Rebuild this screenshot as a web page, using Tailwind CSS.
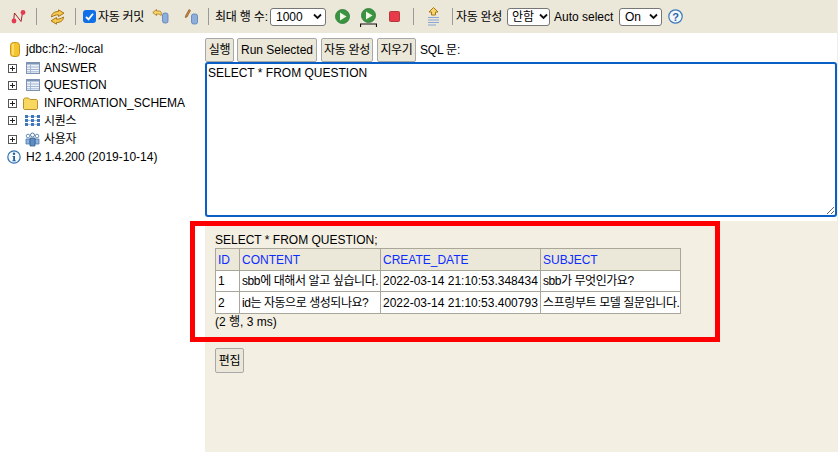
<!DOCTYPE html>
<html lang="ko">
<head>
    <meta charset="UTF-8">
    <script src="https://cdn.jsdelivr.net/npm/@tailwindcss/browser@4"></script>
    <title>H2 Console</title>
</head>
<body class="bg-white">
<div class="relative w-[838px] h-[452px] overflow-hidden flex flex-col text-[12px] leading-[14px] text-black font-['Liberation_Sans','Noto_Sans_CJK_KR',sans-serif]">

    <!-- toolbar -->
    <div class="h-[33px] shrink-0 bg-[#ebe7d9] flex items-center border-r border-[#eeeeee]">
        <svg class="ml-[11px] w-[16px] h-[16px]" viewBox="0 0 16 16" fill="none"><path d="M2.500 12 L3.500 4 L10 12.500 L11.500 4" stroke="#a8232a" stroke-width="1"/><circle cx="3" cy="12" r="2.400" fill="#e63a52"/><circle cx="12" cy="3.500" r="2.400" fill="#e63a52"/></svg>
        <div class="ml-[9px] w-px h-[17px] bg-[#999]"></div>
        <svg class="ml-[13px] w-[15px] h-[16px]" viewBox="0 0 15 16" fill="#f6c94a" stroke="#a9761a" stroke-width="1"><path d="M1.500 8 C1.500 4 5 2.500 8.500 2.500 V0.800 L14 4.200 L8.500 7.500 V5.800 C6 5.800 4 6.500 1.500 8Z"/><path d="M13.500 8 C13.500 12 10 13.500 6.500 13.500 V15.200 L1 11.800 L6.500 8.500 V10.200 C9 10.200 11 9.500 13.500 8Z"/></svg>
        <div class="ml-[10px] w-px h-[17px] bg-[#999]"></div>
        <div class="relative ml-[7px] w-[13px] h-[13px]">
            <input type="checkbox" checked class="block appearance-none w-[13px] h-[13px] rounded-[3px] bg-[#0f6fe6]">
            <svg class="absolute left-0 top-0 w-[13px] h-[13px]" viewBox="0 0 13 13" fill="none"><path d="M3 6.800 L5.500 9.300 L10 3.800" stroke="#fff" stroke-width="1.800"/></svg>
        </div>
        <span class="ml-[2px] w-[46px] whitespace-nowrap tracking-[-0.3px]">자동 커밋</span>
        <svg class="ml-[8px] w-[17px] h-[16px]" viewBox="0 0 17 16"><path d="M0.800 3.500 L4.500 0.500 V2 H7.500 C9.500 2 9.800 5 9 6.500 C8.500 5.500 7.500 5 4.500 5 V6.500Z" fill="#f6d668" stroke="#a9761a" stroke-width="0.800"/><rect x="10.500" y="4" width="5.500" height="10" rx="2" fill="#8eaedb" stroke="#5a7fb5" stroke-width="0.800"/></svg>
        <svg class="ml-[15px] w-[15px] h-[16px]" viewBox="0 0 15 16"><path d="M1.500 7 L5 0.500 L6.500 1.500 L3 8 L1.300 8.500Z" fill="#c9873a" stroke="#7a4a1c" stroke-width="0.600"/><rect x="7.500" y="5" width="6" height="10" rx="2" fill="#8eaedb" stroke="#5a7fb5" stroke-width="0.800"/></svg>
        <div class="ml-[9px] w-px h-[17px] bg-[#999]"></div>
        <span class="ml-[6px] whitespace-nowrap w-[51px] tracking-[-0.2px]">최대 행 수:</span>
        <div class="relative ml-[4px] w-[56px] h-[18px]">
            <select class="appearance-none w-full h-full bg-white border border-[#767676] rounded-[3px] pl-[5px] text-[12px]"><option>1000</option></select>
            <svg class="absolute right-[4px] top-[5px] w-[9px] h-[7px]" viewBox="0 0 9 7" fill="none"><path d="M1 1.500 L4.500 5 L8 1.500" stroke="#111" stroke-width="1.800"/></svg>
        </div>
        <svg class="ml-[9px] w-[15px] h-[15px]" viewBox="0 0 15 15"><circle cx="7.500" cy="7.500" r="7" fill="#3a9440" stroke="#2a7a38" stroke-width="0.800"/><path d="M5 3.500 L11.500 7.500 L5 11.500Z" fill="#f2f7ea"/></svg>
        <div class="ml-[10px] w-[17px] h-[19px] relative top-[1px]">
            <svg class="absolute left-[1px] top-0 w-[15px] h-[15px]" viewBox="0 0 15 15"><circle cx="7.500" cy="7.500" r="7" fill="#3a9440" stroke="#2a7a38" stroke-width="0.800"/><path d="M5 3.500 L11.500 7.500 L5 11.500Z" fill="#f2f7ea"/></svg>
            <svg class="absolute left-0 bottom-0 w-[17px] h-[4px]" viewBox="0 0 17 4" fill="none"><path d="M0.500 4 V1 H16.500 V4" stroke="#111" stroke-width="1.200"/></svg>
        </div>
        <svg class="ml-[12px] w-[11px] h-[11px]" viewBox="0 0 11 11"><rect x="0.500" y="0.500" width="10" height="10" rx="1" fill="#e83a48" stroke="#b23a3a"/></svg>
        <div class="ml-[13px] w-px h-[17px] bg-[#999]"></div>
        <svg class="ml-[13px] w-[13px] h-[19px]" viewBox="0 0 13 19"><path d="M6.500 0.500 L11 5 H8.500 V8 H4.500 V5 H2Z" fill="#f6d668" stroke="#a9761a"/><path d="M1 10.500 H12 M1 13 H12 M1 15.500 H12 M1 18 H9" stroke="#8aa6d8" stroke-width="1"/></svg>
        <div class="ml-[12px] w-px h-[17px] bg-[#999]"></div>
        <span class="ml-[3px] whitespace-nowrap w-[45px] tracking-[-0.3px]">자동 완성</span>
        <div class="relative ml-[6px] w-[43px] h-[18px]">
            <select class="appearance-none w-full h-full bg-white border border-[#767676] rounded-[3px] pl-[4px] text-[12px]"><option>안함</option></select>
            <svg class="absolute right-[2px] top-[5px] w-[9px] h-[7px]" viewBox="0 0 9 7" fill="none"><path d="M1 1.500 L4.500 5 L8 1.500" stroke="#111" stroke-width="1.800"/></svg>
        </div>
        <span class="ml-[4px] whitespace-nowrap w-[59px]">Auto select</span>
        <div class="relative ml-[6px] w-[43px] h-[18px]">
            <select class="appearance-none w-full h-full bg-white border border-[#767676] rounded-[3px] pl-[5px] text-[12px]"><option>On</option></select>
            <svg class="absolute right-[4px] top-[5px] w-[9px] h-[7px]" viewBox="0 0 9 7" fill="none"><path d="M1 1.500 L4.500 5 L8 1.500" stroke="#111" stroke-width="1.800"/></svg>
        </div>
        <svg class="ml-[6px] w-[15px] h-[15px]" viewBox="0 0 15 15"><circle cx="7.500" cy="7.500" r="6.700" fill="#f4f8fc" stroke="#3a78b8" stroke-width="1.200"/><text x="7.500" y="11.500" text-anchor="middle" font-size="11" font-weight="bold" font-family="Liberation Sans" fill="#2a66a8">?</text></svg>
    </div>

    <div class="flex flex-1 min-h-0 border-r border-[#eeeeee]">
        <!-- tree -->
        <div class="w-[205px] shrink-0 pt-[7px] pl-[8px] bg-white">
            <div class="h-[18px] flex items-center">
                <svg class="ml-[2px] w-[10px] h-[15px]" viewBox="0 0 10 15"><rect x="0.500" y="0.500" width="9" height="14" rx="3" fill="#f5c52e" stroke="#c8941a"/><path d="M3 2 V13" stroke="#fbe58a" stroke-width="1.500"/></svg>
                <span class="ml-[6px] whitespace-nowrap">jdbc:h2:~/local</span>
            </div>
            <div class="h-[18px] flex items-center mt-px mb-[-1px]">
                <svg class="w-[9px] h-[9px]" viewBox="0 0 9 9" fill="none"><rect x="0.500" y="0.500" width="8" height="8" stroke="#555"/><path d="M2 4.500 H7 M4.500 2 V7" stroke="#222"/></svg>
                <svg class="ml-[9px] w-[14px] h-[12px]" viewBox="0 0 14 12" fill="none"><rect x="0.500" y="0.500" width="13" height="11" fill="#eef3fa" stroke="#7d93b5"/><path d="M0.500 1.500 H13.500" stroke="#7d93b5" stroke-width="2"/><path d="M1 5 H13 M1 7.500 H13 M1 9.800 H13 M4.500 3 V11" stroke="#a4b6d2"/></svg>
                <span class="ml-[4px] whitespace-nowrap">ANSWER</span>
            </div>
            <div class="h-[18px] flex items-center">
                <svg class="w-[9px] h-[9px]" viewBox="0 0 9 9" fill="none"><rect x="0.500" y="0.500" width="8" height="8" stroke="#555"/><path d="M2 4.500 H7 M4.500 2 V7" stroke="#222"/></svg>
                <svg class="ml-[9px] w-[14px] h-[12px]" viewBox="0 0 14 12" fill="none"><rect x="0.500" y="0.500" width="13" height="11" fill="#eef3fa" stroke="#7d93b5"/><path d="M0.500 1.500 H13.500" stroke="#7d93b5" stroke-width="2"/><path d="M1 5 H13 M1 7.500 H13 M1 9.800 H13 M4.500 3 V11" stroke="#a4b6d2"/></svg>
                <span class="ml-[4px] whitespace-nowrap">QUESTION</span>
            </div>
            <div class="h-[18px] flex items-center">
                <svg class="w-[9px] h-[9px]" viewBox="0 0 9 9" fill="none"><rect x="0.500" y="0.500" width="8" height="8" stroke="#555"/><path d="M2 4.500 H7 M4.500 2 V7" stroke="#222"/></svg>
                <svg class="ml-[6px] w-[15px] h-[13px]" viewBox="0 0 15 13"><path d="M0.500 3 C0.500 1.500 1.500 1 2.500 1 H5.500 L7 2.500 H13 C14 2.500 14.500 3 14.500 4 V11 C14.500 12 14 12.500 13 12.500 H2 C1 12.500 0.500 12 0.500 11Z" fill="#f8d860" stroke="#b98f2a"/></svg>
                <span class="ml-[6px] whitespace-nowrap">INFORMATION_SCHEMA</span>
            </div>
            <div class="h-[17px] flex items-center">
                <svg class="w-[9px] h-[9px]" viewBox="0 0 9 9" fill="none"><rect x="0.500" y="0.500" width="8" height="8" stroke="#555"/><path d="M2 4.500 H7 M4.500 2 V7" stroke="#222"/></svg>
                <svg class="ml-[8px] w-[15px] h-[11px]" viewBox="0 0 15 11" fill="#3f78b8"><path d="M3 1.500 H12 M3 5.500 H12 M3 9.500 H12" stroke="#a9c2e0"/><rect x="0" y="0" width="3" height="3"/><rect x="6" y="0" width="3" height="3"/><rect x="12" y="0" width="3" height="3"/><rect x="0" y="4" width="3" height="3"/><rect x="6" y="4" width="3" height="3"/><rect x="12" y="4" width="3" height="3"/><rect x="0" y="8" width="3" height="3"/><rect x="6" y="8" width="3" height="3"/><rect x="12" y="8" width="3" height="3"/></svg>
                <span class="ml-[4px] whitespace-nowrap tracking-[-0.3px]">시퀀스</span>
            </div>
            <div class="h-[18px] flex items-center mt-px">
                <svg class="w-[9px] h-[9px]" viewBox="0 0 9 9" fill="none"><rect x="0.500" y="0.500" width="8" height="8" stroke="#555"/><path d="M2 4.500 H7 M4.500 2 V7" stroke="#222"/></svg>
                <svg class="ml-[8px] w-[15px] h-[15px]" viewBox="0 0 15 15"><circle cx="3" cy="4" r="1.800" fill="#fff" stroke="#4a78ad" stroke-width="0.800"/><circle cx="12" cy="4" r="1.800" fill="#fff" stroke="#4a78ad" stroke-width="0.800"/><path d="M1 7 H5 V12 H1Z M10 7 H14 V12 H10Z" fill="#8fb3da" stroke="#4a78ad" stroke-width="0.800"/><circle cx="7.500" cy="3" r="2" fill="#fff" stroke="#35608f" stroke-width="0.800"/><path d="M5 6 H10 V14 H5Z" fill="#5e8dc0" stroke="#35608f" stroke-width="0.800"/></svg>
                <span class="ml-[4px] whitespace-nowrap tracking-[-0.3px]">사용자</span>
            </div>
            <div class="h-[18px] flex items-center -ml-[1px]">
                <svg class="w-[14px] h-[14px]" viewBox="0 0 14 14"><circle cx="7" cy="7" r="6.200" fill="#f5f9fd" stroke="#2f6fb0" stroke-width="1.200"/><circle cx="7" cy="3.800" r="1.200" fill="#1f5f9f"/><path d="M5.500 6 H8 V10.500 H9 V11.200 H5.200 V10.500 H6.200 V6.700 H5.500Z" fill="#1f5f9f"/></svg>
                <span class="ml-[5px] whitespace-nowrap">H2 1.4.200 (2019-10-14)</span>
            </div>
        </div>

        <!-- query + result -->
        <div class="flex-1 min-w-0 flex flex-col">
            <div class="h-[188px] shrink-0 bg-white">
                <div class="h-[29px] flex items-end gap-[3px]">
                    <button class="h-[24px] w-[29px] bg-[#ebe7d9] border border-[#a8a8a8] rounded-[2px] tracking-[-0.2px]">실행</button>
                    <button class="h-[24px] w-[80px] bg-[#ebe7d9] border border-[#a8a8a8] rounded-[2px] whitespace-nowrap">Run Selected</button>
                    <button class="h-[24px] w-[52px] ml-px bg-[#ebe7d9] border border-[#a8a8a8] rounded-[2px] whitespace-nowrap tracking-[-0.3px]">자동 완성</button>
                    <button class="h-[24px] w-[39px] ml-px bg-[#ebe7d9] border border-[#a8a8a8] rounded-[2px] whitespace-nowrap tracking-[-0.3px]">지우기</button>
                    <span class="self-center relative top-[2px] ml-px whitespace-nowrap tracking-[-0.2px]">SQL 문:</span>
                </div>
                <textarea class="block w-[632px] h-[155px] border-2 border-[#0a5fc4] rounded-[3px] px-[1px] py-[2px] text-[12px] leading-[14px] outline-none">SELECT * FROM QUESTION</textarea>
            </div>
            <div class="flex-1 bg-[#f4efe3] pl-[10px] pt-[11px]">
                <div class="h-[16px] flex items-center">SELECT * FROM QUESTION;</div>
                <table class="table-fixed w-[466px] border-collapse">
                    <tr class="h-[22px] bg-[#ebe7d9] text-[#0d2cff]">
                        <th class="w-[24px] border border-[#aaa79a] px-[2px] font-normal text-left">ID</th>
                        <th class="w-[141px] border border-[#aaa79a] px-[2px] font-normal text-left">CONTENT</th>
                        <th class="w-[160px] border border-[#aaa79a] px-[2px] font-normal text-left">CREATE_DATE</th>
                        <th class="w-[140px] border border-[#aaa79a] px-[2px] font-normal text-left">SUBJECT</th>
                    </tr>
                    <tr class="h-[21px] bg-white">
                        <td class="border border-[#aaa79a] px-[2px]">1</td>
                        <td class="border border-[#aaa79a] px-[2px] whitespace-nowrap tracking-[-0.4px]">sbb에 대해서 알고 싶습니다.</td>
                        <td class="border border-[#aaa79a] px-[2px] whitespace-nowrap">2022-03-14 21:10:53.348434</td>
                        <td class="border border-[#aaa79a] px-[2px] whitespace-nowrap tracking-[-0.45px]">sbb가 무엇인가요?</td>
                    </tr>
                    <tr class="h-[22px] bg-white">
                        <td class="border border-[#aaa79a] px-[2px]">2</td>
                        <td class="border border-[#aaa79a] px-[2px] whitespace-nowrap tracking-[-0.45px]">id는 자동으로 생성되나요?</td>
                        <td class="border border-[#aaa79a] px-[2px] whitespace-nowrap">2022-03-14 21:10:53.400793</td>
                        <td class="border border-[#aaa79a] px-[2px] whitespace-nowrap tracking-[-0.4px]">스프링부트 모델 질문입니다.</td>
                    </tr>
                </table>
                <div class="h-[16px] flex items-center">(2 행, 3 ms)</div>
                <button class="mt-[18px] h-[25px] w-[29px] bg-[#ebe7d9] border border-[#a8a8a8] rounded-[2px] tracking-[-0.2px]">편집</button>
            </div>
        </div>
    </div>

    <!-- red highlight drawn over the result -->
    <div class="absolute left-[190px] top-[221px] w-[530px] h-[121px] border-[5px] border-[#ff0000]"></div>
</div>
</body>
</html>
